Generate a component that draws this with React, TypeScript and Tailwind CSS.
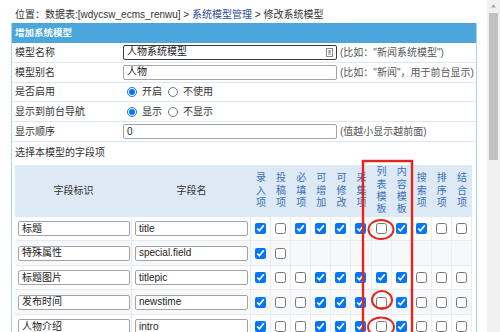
import React from 'react'

const FONT = { fontFamily: '"Liberation Sans", "Noto Sans CJK SC", sans-serif' }

type Row = { label: string; name: string; checks: (boolean | null)[] }

const COLS = ['录入项', '投稿项', '必填项', '可增加', '可修改', '采集项', '列表模板', '内容模板', '搜索项', '排序项', '结合项']

const ROWS: Row[] = [
  { label: '标题', name: 'title', checks: [true, false, true, true, true, true, false, true, true, false, false] },
  { label: '特殊属性', name: 'special.field', checks: [true, false, null, null, null, null, null, null, null, null, null] },
  { label: '标题图片', name: 'titlepic', checks: [true, false, false, true, true, true, true, true, false, false, false] },
  { label: '发布时间', name: 'newstime', checks: [true, false, false, true, true, true, false, true, false, false, false] },
  { label: '人物介绍', name: 'intro', checks: [true, false, false, true, true, true, false, true, false, false, false] },
]

function TextBox({ value, width, dark, icon }: { value: string; width: number; dark?: boolean; icon?: boolean }) {
  return (
    <div
      className={`h-[15px] flex items-center justify-between bg-white rounded-[2px] px-[3px] text-[10px] text-[#222] ${dark ? 'border border-[#3a3a3a]' : 'border border-[#a3a3a3]'}`}
      style={{ width }}
    >
      <span className="leading-none whitespace-nowrap">{value}</span>
      {icon && (
        <svg width="7" height="9" viewBox="0 0 7 9">
          <rect x="0.5" y="0.5" width="6" height="8" fill="none" stroke="#8a8a8a" />
          <rect x="2.5" y="2" width="2" height="3" fill="#8a8a8a" />
          <rect x="2" y="5.5" width="3" height="1" fill="#8a8a8a" />
        </svg>
      )}
    </div>
  )
}

function FormRow({ label, children, hint }: { label: string; children?: React.ReactNode; hint?: string }) {
  return (
    <div className="flex items-center h-[19.8px] border-b border-[#dbe8f1] whitespace-nowrap">
      <div className="w-[111px] pl-[3px] text-[10px] text-[#333]">{label}</div>
      <div className="flex items-center">{children}</div>
      {hint && <div className="ml-[3px] text-[10px] text-[#555]">{hint}</div>}
    </div>
  )
}

function Radio({ checked, label }: { checked: boolean; label: string }) {
  return (
    <label className="flex items-center mr-[2px] text-[10px] text-[#333]">
      <input type="radio" readOnly checked={checked} className="m-0 mr-[5px] w-[10px] h-[10px]" />
      {label}
    </label>
  )
}

function Check({ v }: { v: boolean | null }) {
  if (v === null) return null
  return <input type="checkbox" readOnly checked={v} className="m-0 w-[11px] h-[11px]" />
}

export default function App() {
  return (
    <div className="relative w-[500px] h-[332px] overflow-hidden bg-white flex" style={FONT}>
      <div className="flex-1 pl-[11px] pr-[10px]">
        {/* breadcrumb */}
        <div className="h-[23px] pl-[4px] pt-[9px] text-[10px] leading-[12px] text-[#333] whitespace-nowrap">
          位置：数据表:[wdycsw_ecms_renwu] &gt; <span className="text-[#2a4a94]">系统模型管理</span> &gt; 修改系统模型
        </div>

        <div className="border-x border-[#a9d5ee]">
          <div className="h-[20px] bg-[#4ba6dc] flex items-center pl-[3px] text-[9.5px] font-bold text-white">增加系统模型</div>

          <FormRow label="模型名称" hint={'(比如："新闻系统模型")'}>
            <TextBox value="人物系统模型" width={214} dark icon />
          </FormRow>
          <FormRow label="模型别名" hint={'(比如："新闻"，用于前台显示)'}>
            <TextBox value="人物" width={214} />
          </FormRow>
          <FormRow label="是否启用">
            <div className="flex items-center pl-[4px] gap-[4px]">
              <Radio checked label="开启" />
              <Radio checked={false} label="不使用" />
            </div>
          </FormRow>
          <FormRow label="显示到前台导航">
            <div className="flex items-center pl-[4px] gap-[4px]">
              <Radio checked label="显示" />
              <Radio checked={false} label="不显示" />
            </div>
          </FormRow>
          <FormRow label="显示顺序" hint="(值越小显示越前面)">
            <TextBox value="0" width={214} />
          </FormRow>
          <div className="h-[21px] flex items-center pl-[3px] text-[10px] text-[#333]">选择本模型的字段项</div>

          {/* field table */}
          <div className="pl-[3px] pt-[2px]">
            <div className="w-[457px]">
              <div className="flex h-[52px] bg-[#dde9f5] text-[10px]">
                <div className="w-[117px] flex items-center justify-center text-[#333]">字段标识</div>
                <div className="w-[119px] flex items-center justify-center text-[#333]">字段名</div>
                {COLS.map((c) => (
                  <div key={c} className="w-[20.1px] flex flex-col items-center justify-center leading-[12.4px] text-[#3a70b6]">
                    {c.split('').map((ch, i) => (
                      <span key={i}>{ch}</span>
                    ))}
                  </div>
                ))}
              </div>
              {ROWS.map((r, ri) => (
                <div key={r.name} className={`flex h-[24.5px] border-b border-[#e3ebf2] ${ri % 2 === 1 ? 'bg-[#f6f8fa]' : 'bg-white'}`}>
                  <div className="w-[117px] flex items-center pl-[3px] border-r border-[#e3ebf2]">
                    <TextBox value={r.label} width={112} />
                  </div>
                  <div className="w-[119px] flex items-center pl-[3px] border-r border-[#e3ebf2]">
                    <TextBox value={r.name} width={113} />
                  </div>
                  {r.checks.map((v, i) => (
                    <div key={i} className="w-[20.1px] flex items-center justify-center border-r border-[#e8eef4]">
                      <Check v={v} />
                    </div>
                  ))}
                </div>
              ))}
            </div>
          </div>
        </div>
      </div>

      {/* scrollbar */}
      <div className="w-[13px] h-full bg-[#f1f1f1] flex flex-col items-center">
        <svg width="13" height="12" viewBox="0 0 13 12">
          <path d="M4 7.5 L6.5 4.5 L9 7.5 Z" fill="#a3a3a3" />
        </svg>
        <div className="w-[9px] h-[147px] bg-[#c1c1c1] mt-[1px]" />
      </div>

      {/* red annotations */}
      <svg className="absolute inset-0 pointer-events-none" width="500" height="332" viewBox="0 0 500 332">
        <rect x="363" y="161" width="49" height="200" fill="none" stroke="#e5241d" strokeWidth="2.4" />
        <ellipse cx="381" cy="229.5" rx="12.5" ry="9.5" fill="none" stroke="#e5241d" strokeWidth="2" />
        <ellipse cx="382" cy="300" rx="10" ry="9" fill="none" stroke="#e5241d" strokeWidth="2" />
        <ellipse cx="381" cy="327" rx="13" ry="9.5" fill="none" stroke="#e5241d" strokeWidth="2" />
      </svg>
    </div>
  )
}
